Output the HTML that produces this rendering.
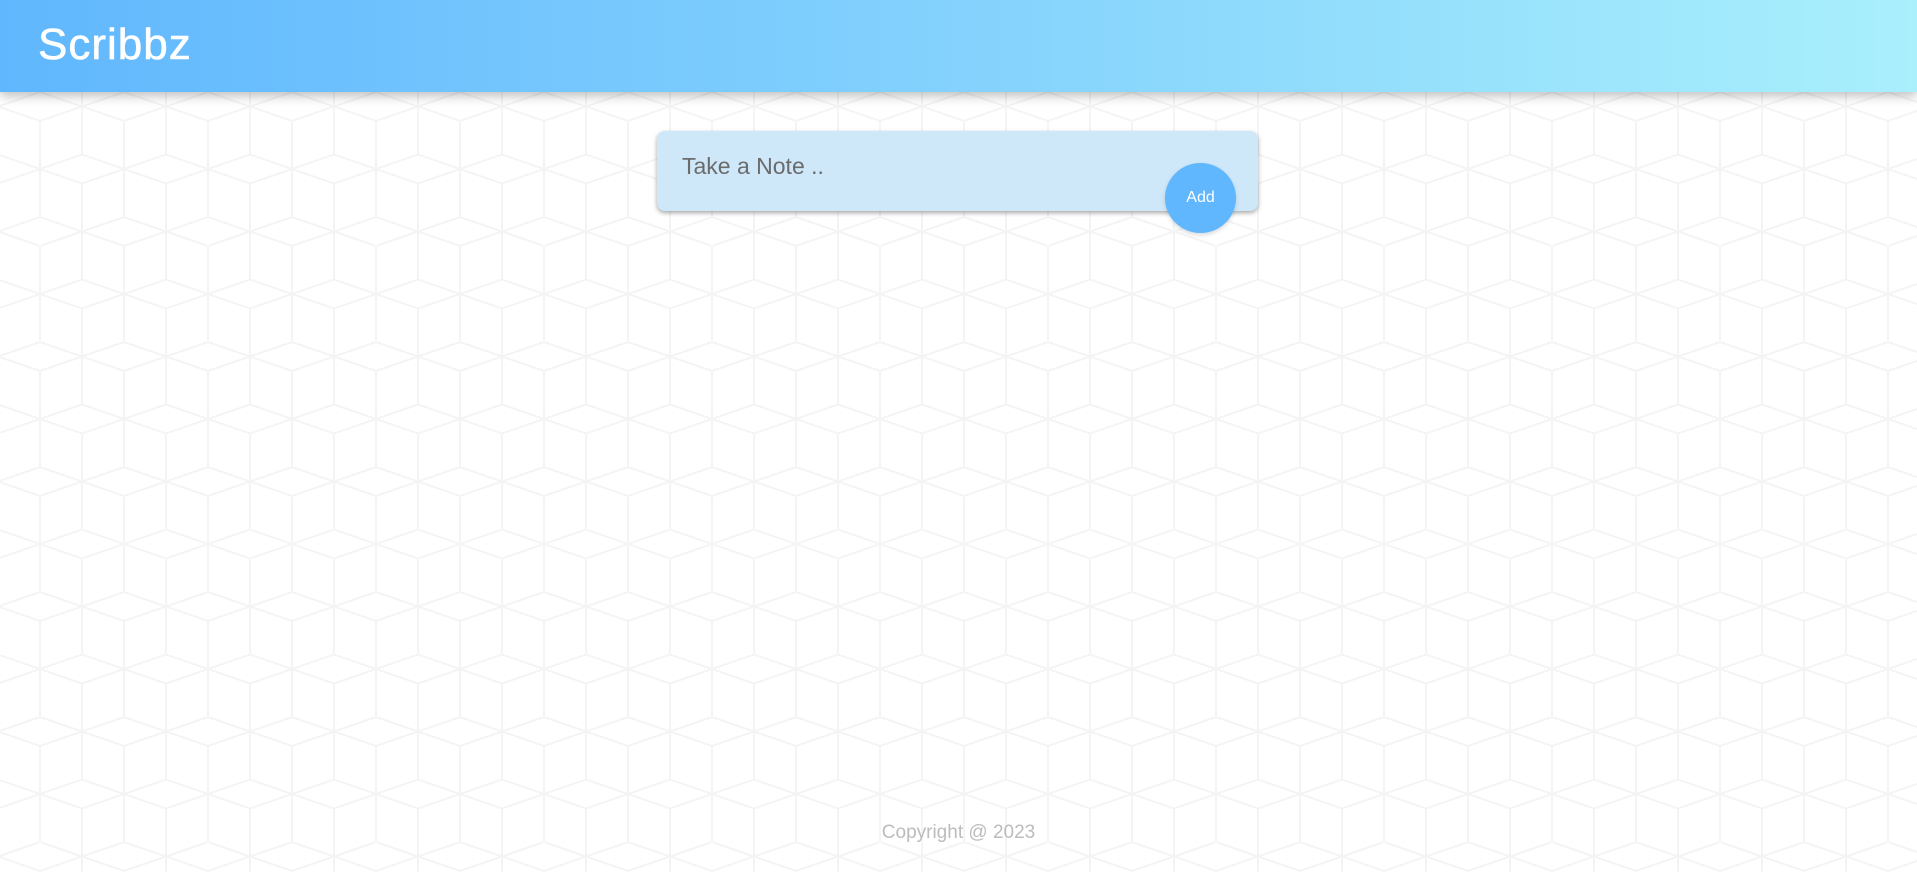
<!DOCTYPE html>
<html><head><style>
html,body{margin:0;padding:0;width:1917px;height:872px;overflow:hidden;background:#fff;font-family:"Liberation Sans",sans-serif;}
.bg{position:absolute;left:0;top:0;width:1917px;height:872px;}
header{position:absolute;left:0;top:0;width:1917px;height:92px;background:linear-gradient(90deg,#60b7fd 0%,#80cffd 45%,#a9effc 100%);box-shadow:0 4px 10px rgba(0,0,0,0.25);}
header h1{margin:0;position:absolute;left:38px;top:20px;font-size:44px;font-weight:normal;color:#fff;letter-spacing:1px;-webkit-text-stroke:0.6px #fff;}
.card{position:absolute;left:657px;top:131px;width:601px;height:80px;background:#cee8fa;border-radius:8px;box-shadow:0 2px 5px rgba(0,0,0,0.35);}
.card span{position:absolute;left:25px;top:22px;font-size:23px;color:#6b6b6b;}
.btn{position:absolute;left:1165px;top:163px;width:71px;height:70px;border-radius:50%;background:#60b7fd;color:#fff;font-size:16px;line-height:70px;text-align:center;box-shadow:0 2px 4px rgba(0,0,0,0.15);}
.foot{position:absolute;left:0;width:1917px;top:822px;text-align:center;font-size:19px;color:#bcbcbc;}
</style></head><body>
<svg class="bg" width="1917" height="872"><defs><pattern id="p" width="84" height="125" patternUnits="userSpaceOnUse" x="-2" y="92">
<g stroke="#f4f4f4" stroke-width="2" fill="none">
<path d="M0,14.5 L42,0 L84,14.5 M0,14.5 L42,29 L84,14.5 M0,0 V62.5 M84,0 V62.5 M42,29 V125 M-42,77 L0,62.5 L42,77 L84,62.5 L126,77 M-42,77 L0,91.5 L42,77 L84,91.5 L126,77 M0,91.5 V125 M84,91.5 V125"/>
</g></pattern></defs><rect width="1917" height="872" fill="url(#p)"/></svg>
<header><h1>Scribbz</h1></header>
<div class="card"><span>Take a Note ..</span></div>
<div class="btn">Add</div>
<div class="foot">Copyright @ 2023</div>
</body></html>
